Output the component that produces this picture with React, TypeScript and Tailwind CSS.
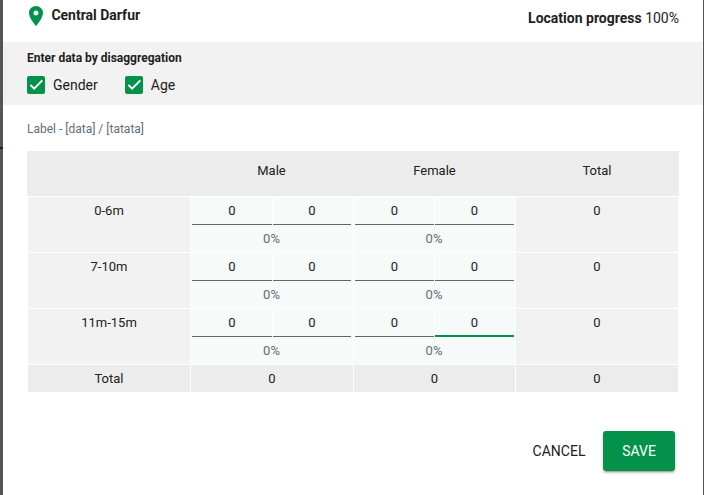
import React from "react";

const GRID = "grid grid-cols-[162px_162px_161px_162px] gap-x-px";

function Checkbox({ label }: { label: string }) {
  return (
    <label className="flex items-center text-sm leading-[18px]">
      <span className="mr-2 flex h-[18px] w-[18px] items-center justify-center rounded-[2px] bg-[#04914a]">
        <svg viewBox="0 0 18 18" className="h-[18px] w-[18px]" fill="none" stroke="#fff" strokeWidth="2">
          <path d="M3.4 8.9 7.1 12.6 15.3 4.4" />
        </svg>
      </span>
      {label}
    </label>
  );
}

function Entry({ cols, focused = false }: { cols: string; focused?: boolean }) {
  return (
    <div className="bg-[#f6faf9] px-px text-center">
      <div className={`grid ${cols} gap-x-px`}>
        <div className="h-7 border-b border-[#636565] leading-7">0</div>
        <div className="-ml-px h-7 border-l border-white">
          <div
            className={
              focused
                ? "relative h-7 leading-7 after:absolute after:inset-x-0 after:top-[26px] after:h-0.5 after:bg-[#04914a]"
                : "h-7 border-b border-[#636565] leading-7"
            }
          >
            0
          </div>
        </div>
      </div>
      <div className="h-[27px] pr-px leading-7 text-[#5f6e7a]">0%</div>
    </div>
  );
}

function Row({ label, focused = false }: { label: string; focused?: boolean }) {
  return (
    <div className={`${GRID} mx-px mt-px h-[55px]`}>
      <div className="bg-[#f2f2f2] text-center leading-7">{label}</div>
      <Entry cols="grid-cols-[80px_78px]" />
      <Entry cols="grid-cols-[79px_79px]" focused={focused} />
      <div className="bg-[#f2f2f2] text-center leading-7">0</div>
    </div>
  );
}

export default function App() {
  return (
    <div className="flex h-[495px] w-[704px] overflow-hidden bg-white font-['Roboto',sans-serif] text-[13px] text-[#212121]">
      <div className="w-[3px] shrink-0 bg-[#555555]">
        <div className="h-[43px] border-b border-[#4c4c4c]" />
        <div className="h-[58px] border-b border-[#4c4c4c]" />
        <div className="h-[48px] border-b-2 border-[#04301b]" />
      </div>
      <main className="w-[700px] shrink-0">
        <header className="flex h-[42px] justify-between px-6 text-sm">
          <div className="flex h-8 items-center font-bold">
            <svg viewBox="5 2 14 20" className="mr-2 ml-[2px] h-5 w-[14px]" fill="#04914a">
              <path d="M12 2C8.13 2 5 5.13 5 9c0 5.25 7 13 7 13s7-7.75 7-13c0-3.87-3.13-7-7-7zm0 9.5a2.5 2.5 0 1 1 0-5 2.5 2.5 0 0 1 0 5z" />
            </svg>
            <span className="mb-[3px] ml-[0.4px]">Central Darfur</span>
          </div>
          <div className="mt-2 leading-5">
            <b>Location progress</b> 100%
          </div>
        </header>
        <section className="h-[63px] bg-[#f2f2f2] px-6 pt-2">
          <div className="text-xs leading-4 font-bold">Enter data by disaggregation</div>
          <div className="mt-[10px] flex gap-[27px]">
            <Checkbox label="Gender" />
            <Checkbox label="Age" />
          </div>
        </section>
        <div className="h-[46px] px-6 pt-4 text-xs leading-4 text-[#5f6e7a]">Label - [data] / [tatata]</div>
        <div className="ml-6 w-[652px]">
          <div className="h-[45px] bg-[#ececec] px-px">
            <div className={`${GRID} text-center leading-10`}>
              <span />
              <span className="pr-px">Male</span>
              <span>Female</span>
              <span>Total</span>
            </div>
          </div>
          <Row label="0-6m" />
          <Row label="7-10m" />
          <Row label="11m-15m" focused />
          <div className={`${GRID} mx-px mt-px text-center leading-[27px]`}>
            <div className="bg-[#ececec]">Total</div>
            <div className="bg-[#ececec]">0</div>
            <div className="bg-[#ececec]">0</div>
            <div className="bg-[#ececec]">0</div>
          </div>
        </div>
        <div className="mt-[39px] flex justify-end pr-7 text-sm">
          <button className="h-10 w-[88px]">CANCEL</button>
          <button className="h-10 w-[72px] rounded-[3px] bg-[#04914a] text-white shadow-[0_2px_2px_rgba(0,0,0,0.14),0_1px_5px_rgba(0,0,0,0.12),0_3px_1px_-2px_rgba(0,0,0,0.2)]">
            SAVE
          </button>
        </div>
      </main>
      <div className="w-px shrink-0 bg-[#555555]" />
    </div>
  );
}
